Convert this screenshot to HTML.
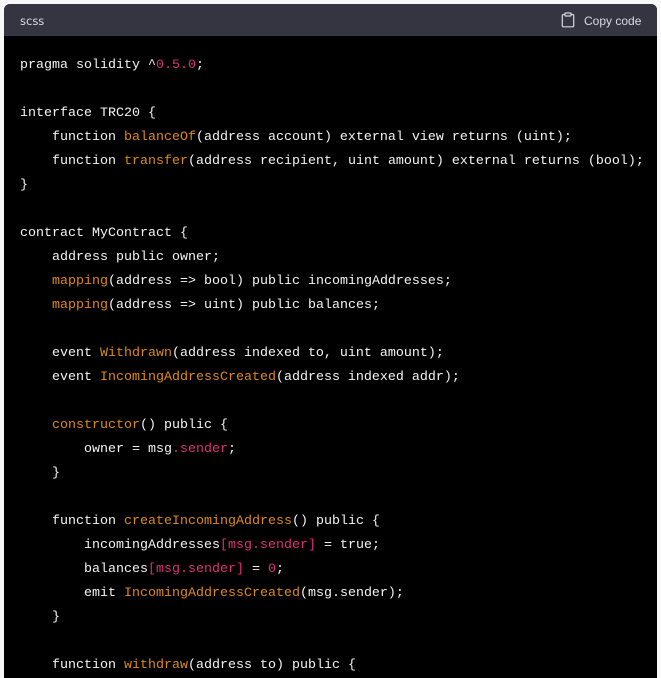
<!DOCTYPE html>
<html>
<head>
<meta charset="utf-8">
<style>
html,body{margin:0;padding:0;width:661px;height:678px;overflow:hidden;background:#f7f7f8}
.card{position:absolute;left:4px;top:4px;width:653px;height:674px;background:#000;border-radius:6px 6px 0 0;overflow:hidden}
.head{position:absolute;left:0;top:0;width:653px;height:32px;background:#343541}
.lang{position:absolute;left:16px;top:10px;font:11.5px/14px "DejaVu Sans","Liberation Sans",sans-serif;color:#d9d9e3}
.copy{position:absolute;left:580px;top:10px;font:12px/14px "Liberation Sans",sans-serif;color:#d9d9e3;white-space:nowrap}
svg{position:absolute;left:557px;top:8px}
pre{position:absolute;left:16px;margin:0;font-family:"Liberation Mono",monospace;font-size:13.333px;line-height:24px;color:#f4f4f4;white-space:pre}
.o{color:#df8a0c}
.r{color:#df3079}
</style>
</head>
<body>
<div class="card">
<div class="head">
<div class="lang">scss</div>
<svg width="15" height="16" viewBox="0 0 15 16" fill="none" stroke="#d9d9e3" stroke-width="1.2"><path d="M4 2.5H2.5A1.2 1.2 0 0 0 1.3 3.7V13.6A1.2 1.2 0 0 0 2.5 14.8H11.5A1.2 1.2 0 0 0 12.7 13.6V3.7A1.2 1.2 0 0 0 11.5 2.5H10"/><rect x="4" y="1" width="6" height="3" rx=".6"/></svg>
<div class="copy">Copy code</div>
</div>
<pre style="top:48px;margin-top:2px">pragma solidity ^<span class="r">0.5.0</span>;

interface TRC20 {
    function <span class="o">balanceOf</span>(address account) external view returns (uint);
    function <span class="o">transfer</span>(address recipient, uint amount) external returns (bool);
}

contract MyContract {
    address public owner;
    <span class="o">mapping</span>(address =&gt; bool) public incomingAddresses;
    <span class="o">mapping</span>(address =&gt; uint) public balances;

    event <span class="o">Withdrawn</span>(address indexed to, uint amount);
    event <span class="o">IncomingAddressCreated</span>(address indexed addr);

    <span class="o">constructor</span>() public {
        owner = msg<span class="r">.sender</span>;
    }

    function <span class="o">createIncomingAddress</span>() public {
        incomingAddresses<span class="r">[msg.sender]</span> = true;
        balances<span class="r">[msg.sender]</span> = <span class="r">0</span>;
        emit <span class="o">IncomingAddressCreated</span>(msg.sender);
    }

    function <span class="o">withdraw</span>(address to) public {</pre>
</div>
</body>
</html>
